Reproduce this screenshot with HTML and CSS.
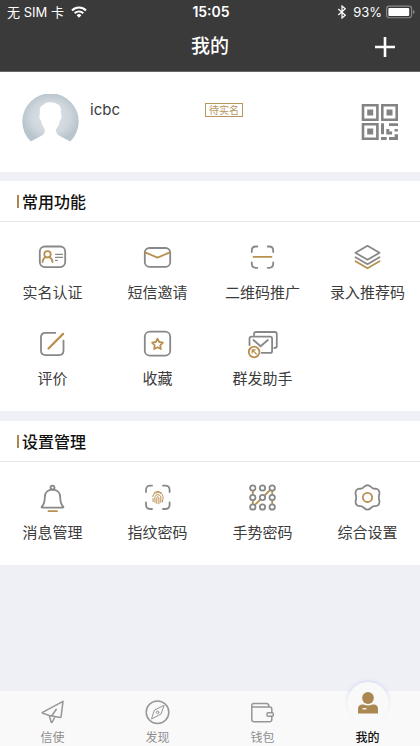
FILE: index.html
```html
<!DOCTYPE html>
<html lang="zh-CN">
<head>
<meta charset="utf-8">
<meta name="viewport" content="width=device-width, initial-scale=1">
<title>我的</title>
<link rel="stylesheet" href="styles.css">
</head>
<body>
<header class="top">
  <div class="status">
    <div class="status-left">
      <span>无 SIM 卡</span>
      <svg width="16" height="12" viewBox="0 0 16 12" fill="none" stroke="#fff" stroke-width="2.1"><path d="M1 4.4a10 10 0 0 1 14 0"/><path d="M3.7 7.2a6.2 6.2 0 0 1 8.6 0"/><path d="M8 11.8L5.6 9.3a3.4 3.4 0 0 1 4.8 0z" fill="#fff" stroke="none"/></svg>
    </div>
    <time class="clock">15:05</time>
    <div class="status-right">
      <svg width="10" height="14" viewBox="0 0 10 14" fill="none" stroke="#fff" stroke-width="1.2"><path d="M1.3 4l7 6.2L5 13V1l3.3 2.8-7 6.2"/></svg>
      <span>93%</span>
      <svg width="29" height="14" viewBox="0 0 29 14"><rect x=".6" y="1.1" width="25" height="11.6" rx="2.6" fill="none" stroke="#8b8b8b" stroke-width="1.1"/><rect x="2.4" y="2.9" width="20.8" height="8" rx="1" fill="#fff"/><path d="M27 5q1.6.4 1.6 2T27 9z" fill="#8b8b8b"/></svg>
    </div>
  </div>
  <div class="nav">
    <h1>我的</h1>
    <button class="add" type="button" aria-label="添加"><svg width="20" height="20" viewBox="0 0 20 20" stroke="#fff" stroke-width="2.6"><path d="M0 10h20M10 0v20"/></svg></button>
  </div>
</header>

<main>
  <section class="profile">
    <svg class="avatar" width="57" height="57" viewBox="0 0 57 57">
      <defs><radialGradient id="av"><stop offset="0" stop-color="#dbe1e6"/><stop offset=".65" stop-color="#d0d8de"/><stop offset="1" stop-color="#b9c5cd"/></radialGradient></defs>
      <path d="M8.7 47.6A28.2 28.2 0 1 1 48.3 47.6L36.5 41.3Q34 40 34 36.8C34 33.8 37.2 32.2 37.8 26.7Q39.9 25.5 39.5 21.2L38.8 20.6C39.5 14.5 38.6 11.2 35.3 10.2C33 7.8 24 7 21.5 10.7C17.8 12.2 17.3 15 18 20.6L17.4 21.2Q17 25.5 19.1 26.7C19.7 32.2 22.9 33.8 22.9 36.8Q22.9 40 20.4 41.3Z" fill="url(#av)"/>
    </svg>
    <span class="name">icbc</span>
    <span class="tag">待实名</span>
    <button class="qr" type="button" aria-label="二维码">
      <svg width="38" height="38" viewBox="0 0 38 38" fill="#838383"><g fill="none" stroke="#838383" stroke-width="2.6"><path d="M2 2.3h14.4v14.4H2zM21.3 2.3h14.4v14.4H21.3zM2 21.3h14.4v14.4H2z"/></g><path d="M6.2 6.4h6v6h-6zM25.5 6.4h6v6h-6zM6.2 25.5h6v6h-6zM20 20.2h3v11h-3zM28 20.2h9v2.8h-9zM33.6 26h3.2v2.6h-3.2zM25.3 26h3v2.6h2.8v2.8h-5.8zM20 34h5.7v3H20zM33.6 31.3H37V37h-9v-3h5.6z"/></svg>
    </button>
  </section>

  <section class="group">
    <h2>常用功能</h2>
    <div class="grid">
      <a href="#" class="item"><svg class="ico" viewBox="0.5 0 31 32"><rect x="3.3" y="5.5" width="25.4" height="20.6" rx="5"/><path class="thin" d="M19 13.3h7M19 16.3h7M19 19.4h1.8"/><g class="gold"><circle cx="11" cy="13.3" r="3.2"/><path d="M6 21c.2-2.6 1.6-4.2 3.3-5M12.7 16c1.7.8 3.1 2.4 3.3 5"/></g></svg><span>实名认证</span></a>
      <a href="#" class="item"><svg class="ico" viewBox="0.5 0 31 32"><rect x="3.3" y="7" width="25.4" height="18.8" rx="4.5"/><path class="gold" d="M4.2 11.6L16 16.7l11.8-5.1"/></svg><span>短信邀请</span></a>
      <a href="#" class="item"><svg class="ico" viewBox="0.5 0 31 32"><path d="M5.3 11V9.500q0-4 4-4h1.500M21.200 5.500h1.500q4 0 4 4V11M5.300 21.300v1.500q0 4 4 4h1.500M21.200 26.800h1.500q4 0 4-4v-1.500"/><path class="gold" d="M7 15.900h18"/></svg><span>二维码推广</span></a>
      <a href="#" class="item"><svg class="ico" viewBox="0.5 0 31 32"><path d="M16 4.800l12 7-12 7-12-7zM4 16.200l12 7 12-7"/><path class="gold" d="M4 20.300l12 7 12-7"/></svg><span>录入推荐码</span></a>
      <a href="#" class="item"><svg class="ico" viewBox="0.5 0 31 32"><path d="M18.800 5.900H9Q4.500 5.900 4.500 10.400v13.200Q4.500 28.100 9 28.100h13.500Q27 28.100 27 23.600v-10"/><path class="gold heavy" d="M12 21.500L26.600 6.900"/></svg><span>评价</span></a>
      <a href="#" class="item"><svg class="ico" viewBox="0.5 0 31 32"><rect x="3.3" y="4.7" width="25.4" height="24" rx="5"/><path class="gold" d="M16 11.700l1.700 3.300 3.700.6-2.600 2.700.5 3.700-3.300-1.700-3.300 1.700.5-3.700-2.600-2.700 3.700-.6z"/></svg><span>收藏</span></a>
      <a href="#" class="item"><svg class="ico" viewBox="0.5 0 31 32"><path d="M7.500 8V7q0-2 2-2h18.800q2 0 2 2v12q0 2-2.500 2M3 18.200v-6.500q0-2 2-2h18.600q2 0 2 2v12.200q0 2-2 2h-8.500M6.900 13l7.200 6.300 7.300-6.300"/><g class="gold"><circle cx="7.6" cy="25" r="5.3"/><path class="thin" d="M9.800 27L6 23.200M5.700 26v-3.100h3.100"/></g></svg><span>群发助手</span></a>
    </div>
  </section>

  <section class="group">
    <h2>设置管理</h2>
    <div class="grid">
      <a href="#" class="item"><svg class="ico" viewBox="0.5 0 31 32"><circle cx="16" cy="6.600" r="2"/><path d="M16 8.600C11.500 8.600 8.300 11.500 8.300 16C8.300 21.500 7.500 23.600 5.300 25.600Q4.600 26.600 5.800 26.700H26.200Q27.400 26.600 26.700 25.600C24.500 23.600 23.700 21.500 23.700 16C23.700 11.500 20.500 8.600 16 8.600Z"/><path class="gold" d="M12 30.200h8.500"/></svg><span>消息管理</span></a>
      <a href="#" class="item"><svg class="ico" viewBox="0.5 0 31 32"><path d="M4.500 11V9q0-4.300 4.300-4.300H10.500M21.500 4.700h2.300q4.300 0 4.300 4.300v2M4.500 21.500v2.300Q4.500 28 8.800 28H10.500M21.500 28h2.300q4.300 0 4.300-4.200v-2.300"/><g class="gold fine"><path d="M12.500 12q3.800-3.300 7.500 0M11.200 15.500c.5-5.300 9.800-5.300 10.300 0v2M11.500 20.500v-3M13.400 21.500v-5.200c.2-3.500 5.700-3.500 5.900 0v5M15.300 22.500v-6q1.100-1.600 2.100 0v6.300M21.300 18.500l-.5 2.500"/></g></svg><span>指纹密码</span></a>
      <a href="#" class="item"><svg class="ico" viewBox="0.5 0 31 32"><path class="gold" d="M6.300 7v19L25.700 7v19"/><g class="dots"><circle cx="6.300" cy="7" r="2.700"/><circle cx="16" cy="7" r="2.700"/><circle cx="25.700" cy="7" r="2.700"/><circle cx="6.300" cy="16.500" r="2.700"/><circle cx="16" cy="16.500" r="2.700"/><circle cx="25.700" cy="16.500" r="2.700"/><circle cx="6.300" cy="26" r="2.700"/><circle cx="16" cy="26" r="2.700"/><circle cx="25.700" cy="26" r="2.700"/></g></svg><span>手势密码</span></a>
      <a href="#" class="item"><svg class="ico" viewBox="0.5 0 31 32"><path d="M12.600 5.800Q16 2.600 19.400 5.800Q21 8 23.700 7.700Q28 8 28 12.600Q26.600 16.400 28 20.200Q28 24.800 23.700 25.100Q21 24.800 19.400 27Q16 30.200 12.600 27Q11 24.800 8.300 25.100Q4 24.800 4 20.200Q5.400 16.400 4 12.600Q4 8 8.300 7.700Q11 8 12.600 5.800Z"/><circle class="gold" cx="16" cy="16.4" r="4.6"/></svg><span>综合设置</span></a>
    </div>
  </section>
</main>

<nav class="tabs">
  <a href="#" class="tab"><svg class="ico" viewBox="0.5 0 31 32"><path d="M26.500 5.300L6 16.300q-.6.500 0 .8l6.800 2.400 11 1.900q.7 0 .8-.7zM12.800 19.500L14.600 26q.5 1 1.200 0l2.700-5.300M15.300 19.800l4.500-6.500"/></svg><span>信使</span></a>
  <a href="#" class="tab"><svg class="ico" viewBox="0.5 0 31 32"><circle cx="16" cy="16.2" r="11.3"/><g class="thin"><path d="M22.500 9.700l-3 8.300-9.500 5 2.700-8.500z"/><circle cx="16" cy="16.3" r="1.3"/></g></svg><span>发现</span></a>
  <a href="#" class="tab"><svg class="ico" viewBox="0.5 0 31 32"><path d="M25.300 16.500V13q0-2-2-2H5.300M5.300 9.500q0-2 2-2h13q2 0 2.200 3.500M5.300 9.500v14q0 2.300 2.300 2.300H23q2.300 0 2.300-2.300V20.500"/><rect x="20.5" y="16.8" width="6.3" height="3.4" rx="1"/></svg><span>钱包</span></a>
  <a href="#" class="tab active" aria-current="page"><span class="bubble"><svg width="20" height="22" viewBox="0 0 20 22" fill="#ab8751"><circle cx="10" cy="6" r="5.9"/><path d="M0 21.500v-4.500q0-4.500 4.500-4.500h1q4.500 2.200 9 0h1Q20 12.500 20 17v4.500z"/><path d="M4.500 16.800h4" stroke="#fff" stroke-width="1.3"/></svg></span><span>我的</span></a>
</nav>
</body>
</html>
```
FILE: styles.css
```css
* { box-sizing: border-box; }

body {
  margin: 0;
  min-height: 100vh;
  display: flex;
  flex-direction: column;
  background: #eff0f5;
  color: #3c3c3c;
  font-family: Inter, "Noto Sans CJK SC", sans-serif;
}

a { color: inherit; text-decoration: none; }

button {
  padding: 0;
  border: 0;
  background: none;
  cursor: pointer;
}

svg { display: block; flex: none; }

.top {
  background: #3a3a3a;
  color: #fff;
  border-bottom: 1px solid #6b6666;
}

.status {
  display: grid;
  grid-template-columns: 1fr auto 1fr;
  align-items: center;
  height: 24px;
  padding: 0 5px 0 7px;
  font-size: 13px;
  line-height: 24px;
}

.status-left, .status-right { display: flex; align-items: center; gap: 7px; }
.status-right { justify-content: flex-end; gap: 4px; }
.status-right span { margin-left: 2px; }
.clock { font-size: 14px; font-weight: 600; }

.nav {
  display: grid;
  grid-template-columns: 1fr auto 1fr;
  align-items: center;
  height: 47px;
  padding: 0 25px 1px;
}

.nav h1 {
  grid-column: 2;
  margin: 0;
  font-size: 19px;
  line-height: 30px;
  font-weight: 500;
}

.add { justify-self: end; }

.profile {
  display: grid;
  grid-template-columns: 68px 115px auto 1fr;
  align-items: start;
  height: 100px;
  margin-bottom: 9px;
  padding: 22px 21px 0 22px;
  background: #fff;
}

.name {
  margin-top: 4px;
  font-size: 15px;
  line-height: 24px;
}

.tag {
  margin-top: 9px;
  padding: 0 3px;
  border: 1px solid #b8965f;
  color: #b8965f;
  font-size: 10px;
  line-height: 12px;
}

.qr { justify-self: end; margin-top: 9px; }

.group {
  margin-bottom: 10px;
  background: #fff;
}

.group h2 {
  display: flex;
  align-items: center;
  gap: 3px;
  height: 41px;
  margin: 0;
  padding-left: 17px;
  border-bottom: 1px solid #e6e6e9;
  color: #111;
  font-size: 16px;
  font-weight: 500;
}

.group h2::before {
  content: "";
  flex: none;
  width: 2px;
  height: 13px;
  background: #ab8751;
}

.grid {
  display: grid;
  grid-template-columns: repeat(4, 1fr);
  row-gap: 24px;
  padding: 19px 0 22px;
}

.item {
  display: flex;
  flex-direction: column;
  align-items: center;
  gap: 10px;
  font-size: 15px;
  line-height: 20px;
  white-space: nowrap;
}

.ico {
  width: 31px;
  height: 32px;
  fill: none;
  stroke: #888;
  stroke-width: 1.8;
  stroke-linecap: round;
  stroke-linejoin: round;
}

.ico .gold { stroke: #b8904f; }
.ico .thin { stroke-width: 1.2; }
.ico .fine { stroke-width: 1; }
.ico .heavy { stroke-width: 2.2; }
.ico .dots { fill: #fff; }

.tabs {
  position: sticky;
  bottom: 0;
  display: grid;
  grid-template-columns: repeat(4, 1fr);
  margin-top: auto;
  padding-top: 5px;
  background: #f9f9f9;
}

.tab {
  position: relative;
  display: flex;
  flex-direction: column;
  align-items: center;
  justify-content: flex-end;
  gap: 2px;
  color: #8e8e8e;
  font-size: 12px;
  line-height: 16px;
}

.tab .ico { stroke: #969696; stroke-width: 1.5; }
.tab .ico .thin { stroke-width: 1; }
.tab.active { color: #111; font-weight: 500; }

.bubble {
  position: absolute;
  bottom: 22px;
  display: grid;
  place-items: center;
  width: 42px;
  height: 42px;
  border-radius: 50%;
  background: #f9f9f9;
  box-shadow: 0 -2px 3px #dcdff3;
}
```
